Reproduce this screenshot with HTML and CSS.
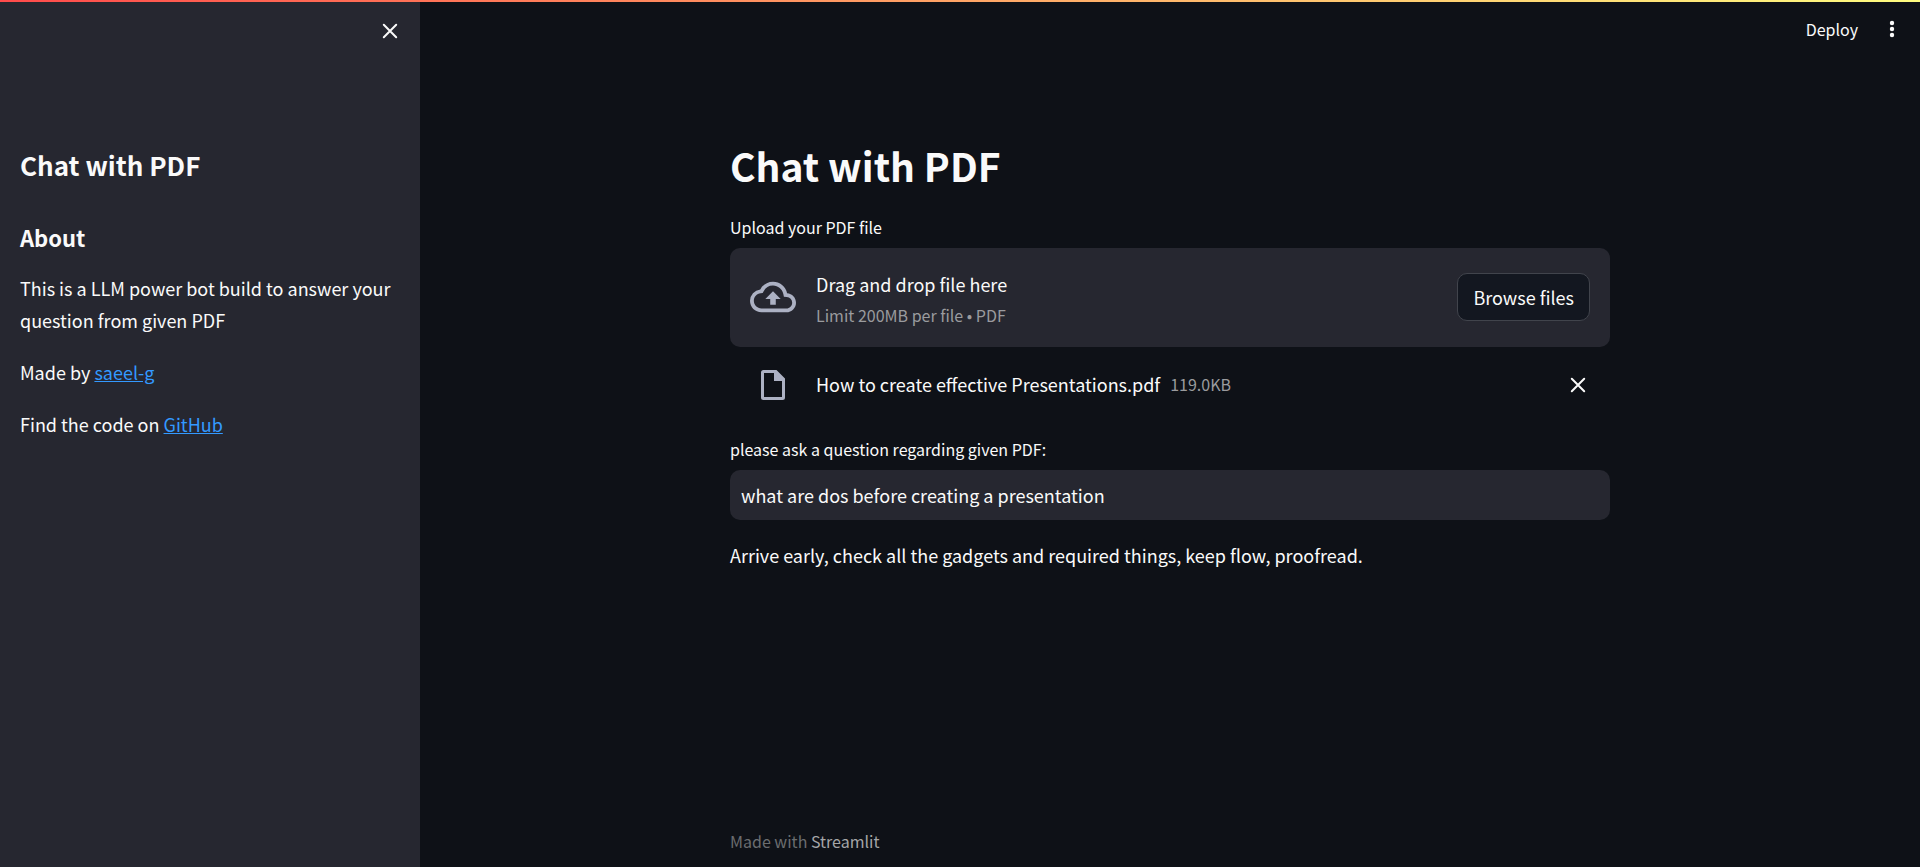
FILE: index.html
```html
<!DOCTYPE html>
<html lang="en">
<head>
<meta charset="utf-8">
<meta name="viewport" content="width=device-width, initial-scale=1">
<title>Chat with PDF</title>
<link rel="stylesheet" href="styles.css">
</head>
<body>
<div class="decoration"></div>
<div class="app">
  <aside class="sidebar">
    <div class="sidebar-header">
      <button class="icon-button" type="button" aria-label="Close sidebar">
        <svg class="icon-close" viewBox="0 0 16 16" aria-hidden="true"><path d="M1.8 1.8 14.2 14.2M14.2 1.8 1.8 14.2"/></svg>
      </button>
    </div>
    <div class="sidebar-content">
      <h2 class="sidebar-title">Chat with PDF</h2>
      <h3 class="sidebar-subtitle">About</h3>
      <p class="text">This is a LLM power bot build to answer your question from given PDF</p>
      <p class="text">Made by <a class="link" href="#">saeel-g</a></p>
      <p class="text">Find the code on <a class="link" href="#">GitHub</a></p>
    </div>
  </aside>
  <div class="view">
    <header class="toolbar">
      <button class="deploy" type="button">Deploy</button>
      <button class="icon-button" type="button" aria-label="Main menu">
        <svg class="icon-menu" viewBox="0 0 6 18" aria-hidden="true"><circle cx="3" cy="3" r="2.2"/><circle cx="3" cy="9" r="2.2"/><circle cx="3" cy="15" r="2.2"/></svg>
      </button>
    </header>
    <main class="block">
      <h1 class="title">Chat with PDF</h1>
      <label class="label" for="browse">Upload your PDF file</label>
      <section class="dropzone">
        <svg class="icon-cloud" viewBox="0 0 24 24" aria-hidden="true"><path d="M19.35 10.04A7.49 7.49 0 0 0 12 4C9.11 4 6.6 5.64 5.35 8.04A5.994 5.994 0 0 0 0 14c0 3.31 2.69 6 6 6h13c2.76 0 5-2.24 5-5 0-2.64-2.05-4.78-4.65-4.96zM19 18H6c-2.21 0-4-1.79-4-4 0-2.05 1.53-3.76 3.56-3.97l1.07-.11.5-.95A5.469 5.469 0 0 1 12 6c2.62 0 4.88 1.86 5.39 4.43l.3 1.5 1.53.11A2.98 2.98 0 0 1 22 15c0 1.65-1.35 3-3 3zM8 13h2.55v3h2.9v-3H16l-4-4z"/></svg>
        <div class="dropzone-text">
          <span class="dropzone-main">Drag and drop file here</span>
          <span class="small">Limit 200MB per file • PDF</span>
        </div>
        <button class="browse" id="browse" type="button">Browse files</button>
      </section>
      <div class="file">
        <svg class="icon-file" viewBox="0 0 24 30" aria-hidden="true"><path fill-rule="evenodd" d="M2.500 0H15.500L24 8.500V27.500A2.500 2.500 0 0 1 21.500 30H2.500A2.500 2.500 0 0 1 0 27.500V2.500A2.500 2.500 0 0 1 2.500 0ZM3 3V27H21V11H13V3Z"/></svg>
        <span class="file-name">How to create effective Presentations.pdf</span>
        <span class="small">119.0KB</span>
        <button class="icon-button file-remove" type="button" aria-label="Remove file">
          <svg class="icon-close" viewBox="0 0 16 16" aria-hidden="true"><path d="M1.8 1.8 14.2 14.2M14.2 1.8 1.8 14.2"/></svg>
        </button>
      </div>
      <label class="label" for="question">please ask a question regarding given PDF:</label>
      <input class="question" id="question" type="text" value="what are dos before creating a presentation">
      <p class="text">Arrive early, check all the gadgets and required things, keep flow, proofread.</p>
    </main>
    <footer class="footer">Made with <a class="footer-link" href="#">Streamlit</a></footer>
  </div>
</div>
</body>
</html>
```

FILE: styles.css
```css
* {
  box-sizing: border-box;
}

body {
  margin: 0;
  background: #0e1117;
  color: #fafafa;
  font-family: "Noto Sans CJK JP", "Noto Sans", sans-serif;
  font-size: 18px;
  line-height: 32px;
}

h1, h2, h3, p {
  margin: 0;
}

button, input {
  border: 0;
  padding: 0;
  background: none;
  color: inherit;
  font: inherit;
}

button {
  cursor: pointer;
}

svg {
  display: block;
  flex: none;
}

.decoration {
  position: fixed;
  top: 0;
  left: 0;
  right: 0;
  height: 2px;
  background: linear-gradient(90deg, #ff4b4b, #fffd80);
}

.app {
  display: grid;
  grid-template-columns: 420px 1fr;
  min-height: 100vh;
}

.sidebar {
  background: #262730;
}

.sidebar-header {
  display: flex;
  justify-content: flex-end;
  padding: 15px 14px 0;
}

.icon-button {
  display: flex;
  align-items: center;
  justify-content: center;
  width: 32px;
  height: 32px;
}

.icon-close {
  width: 16px;
  height: 16px;
  fill: none;
  stroke: #fafafa;
  stroke-width: 2;
  stroke-linecap: round;
}

.icon-menu {
  width: 6px;
  height: 18px;
  fill: #fafafa;
}

.sidebar-content {
  display: flex;
  flex-direction: column;
  gap: 20px;
  padding: 92px 20px 40px;
}

.sidebar-title {
  padding: 8px 0;
  font-size: 26px;
  line-height: 36px;
}

.sidebar-subtitle {
  padding-top: 11px;
  font-size: 22px;
  line-height: 30px;
}

.link {
  color: #3399ff;
}

.view {
  display: flex;
  flex-direction: column;
  min-width: 0;
}

.toolbar {
  display: flex;
  align-items: center;
  justify-content: flex-end;
  gap: 18px;
  padding: 13px 12px 0 20px;
}

.deploy {
  font-size: 16px;
  line-height: 30px;
}

.block {
  flex: 1;
  width: 100%;
  max-width: 920px;
  margin: 0 auto;
  padding: 88px 20px 40px;
}

.title {
  margin-bottom: 18px;
  font-size: 39px;
  line-height: 64px;
}

.label {
  display: block;
  margin-bottom: 9px;
  font-size: 16px;
  line-height: 24px;
}

.dropzone {
  display: flex;
  align-items: center;
  gap: 20px;
  min-height: 99px;
  padding: 14px 20px 16px;
  border-radius: 10px;
  background: #262730;
}

.icon-cloud {
  width: 46px;
  height: 46px;
  fill: #acb1c3;
}

.dropzone-text {
  display: flex;
  flex: 1;
  flex-direction: column;
  padding-top: 6px;
}

.dropzone-main {
  line-height: 31px;
}

.small {
  color: #9a9b9e;
  font-size: 16px;
  line-height: 30px;
}

.browse {
  padding: 7px 15px;
  border: 1px solid #41444c;
  border-radius: 10px;
  background: #131720;
}

.file {
  display: flex;
  align-items: center;
  gap: 10px;
  margin-bottom: 36px;
  padding: 22px 16px 0 31px;
}

.file-name,
.file .small {
  line-height: 30px;
  padding-bottom: 2px;
}

.icon-file {
  width: 24px;
  height: 30px;
  margin-right: 21px;
  fill: #acb1c3;
}

.file-remove {
  margin-left: auto;
}

.question {
  display: block;
  width: 100%;
  height: 50px;
  margin-bottom: 19px;
  padding: 0 11px 1px;
  border-radius: 10px;
  background: #262730;
}

.footer {
  width: 100%;
  max-width: 920px;
  margin: 0 auto;
  padding: 0 20px 10px;
  color: #6b6d70;
  font-size: 16px;
}

.footer-link {
  color: #a5a6a8;
  text-decoration: none;
}
```
